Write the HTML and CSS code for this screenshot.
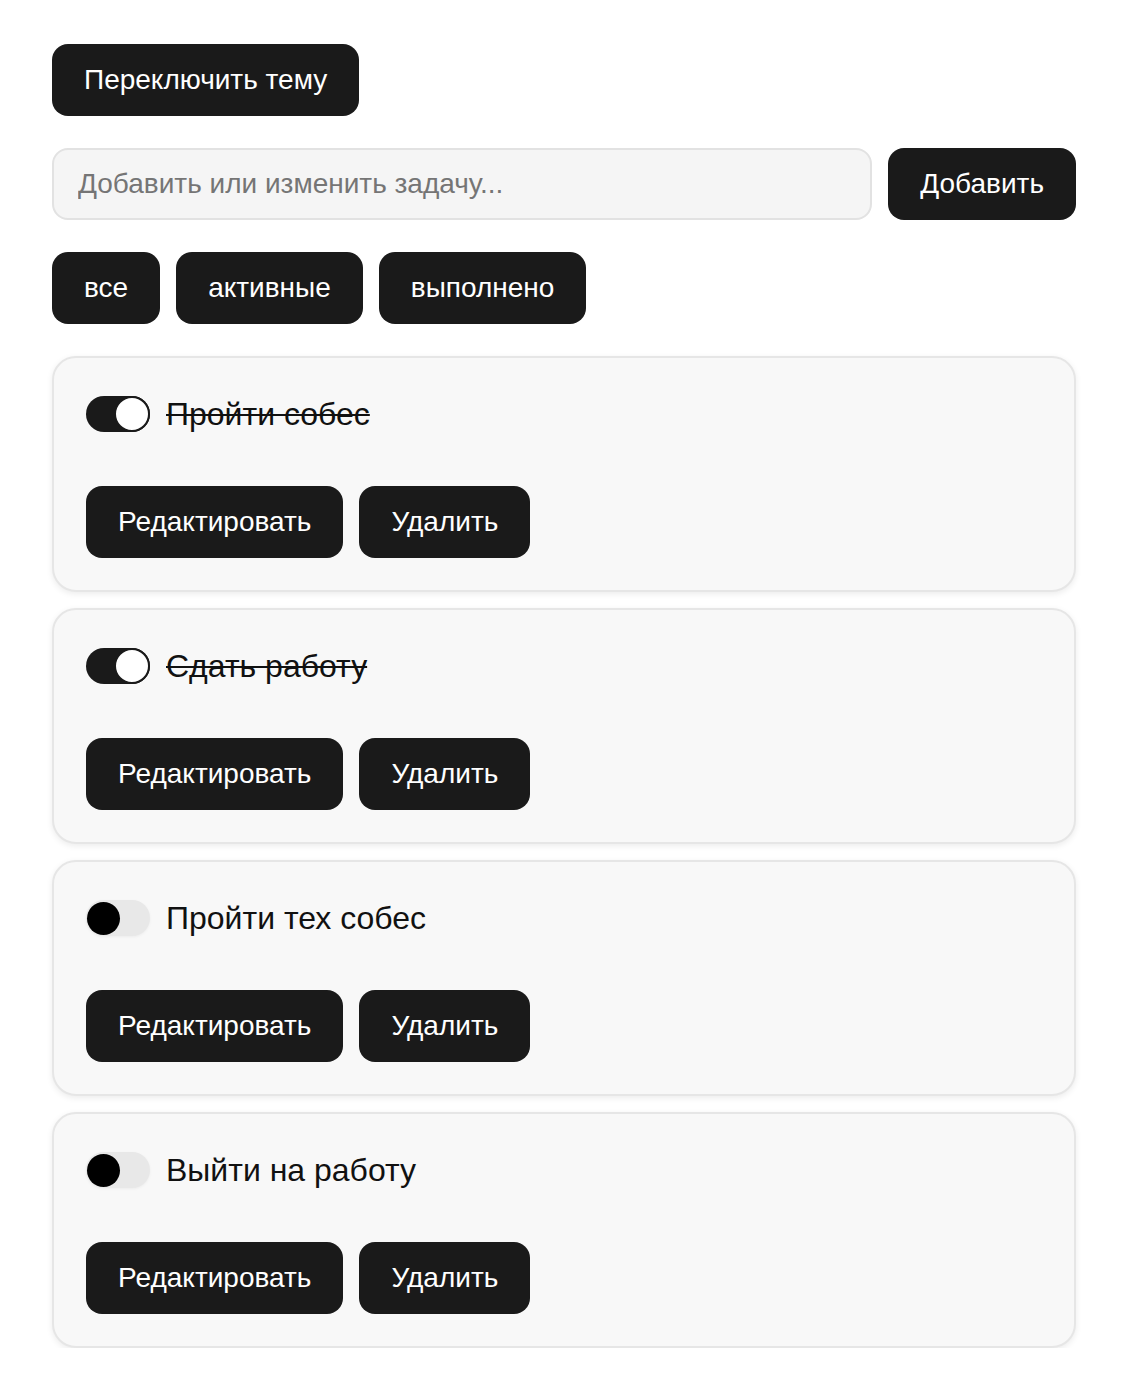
FILE: index.html
```html
<!DOCTYPE html>
<html lang="ru">
<head>
<meta charset="utf-8">
<title>Задачи</title>
<link rel="stylesheet" href="styles.css">
</head>
<body>
<div class="app">
  <div class="top">
    <button class="btn">Переключить тему</button>
  </div>
  <div class="add-row">
    <input class="task-input" type="text" placeholder="Добавить или изменить задачу...">
    <button class="btn">Добавить</button>
  </div>
  <div class="filters">
    <button class="btn">все</button>
    <button class="btn">активные</button>
    <button class="btn">выполнено</button>
  </div>
  <div class="list">
    <div class="card">
      <div class="task-row">
        <span class="toggle on"><span class="knob"></span></span>
        <span class="task-text done">Пройти собес</span>
      </div>
      <div class="actions">
        <button class="btn">Редактировать</button>
        <button class="btn">Удалить</button>
      </div>
    </div>
    <div class="card">
      <div class="task-row">
        <span class="toggle on"><span class="knob"></span></span>
        <span class="task-text done">Сдать работу</span>
      </div>
      <div class="actions">
        <button class="btn">Редактировать</button>
        <button class="btn">Удалить</button>
      </div>
    </div>
    <div class="card">
      <div class="task-row">
        <span class="toggle"><span class="knob"></span></span>
        <span class="task-text">Пройти тех собес</span>
      </div>
      <div class="actions">
        <button class="btn">Редактировать</button>
        <button class="btn">Удалить</button>
      </div>
    </div>
    <div class="card">
      <div class="task-row">
        <span class="toggle"><span class="knob"></span></span>
        <span class="task-text">Выйти на работу</span>
      </div>
      <div class="actions">
        <button class="btn">Редактировать</button>
        <button class="btn">Удалить</button>
      </div>
    </div>
  </div>
</div>
</body>
</html>
```

FILE: styles.css
```css
* { box-sizing: border-box; }
html, body { margin: 0; padding: 0; background: #ffffff; }
body {
  font-family: "Liberation Sans", Arial, sans-serif;
  color: #111111;
}
.app {
  width: 1024px;
  margin-left: 52px;
  padding-top: 44px;
  display: flex;
  flex-direction: column;
  gap: 32px;
}
.top { display: flex; }
.btn {
  font-family: "Liberation Sans", Arial, sans-serif;
  font-size: 28px;
  line-height: 32px;
  height: 72px;
  padding: 0 32px;
  background: #1a1a1a;
  color: #ffffff;
  border: none;
  border-radius: 16px;
  cursor: pointer;
  white-space: nowrap;
}
.add-row {
  display: flex;
  gap: 16px;
}
.task-input {
  flex: 1;
  height: 72px;
  padding: 0 24px;
  font-family: "Liberation Sans", Arial, sans-serif;
  font-size: 28px;
  background: #f5f5f5;
  border: 2px solid #e2e2e2;
  border-radius: 16px;
  color: #111;
  outline: none;
}
.task-input::placeholder { color: #757575; }
.filters {
  display: flex;
  gap: 16px;
}
.list {
  display: flex;
  flex-direction: column;
  gap: 16px;
}
.card {
  background: #f8f8f8;
  border: 2px solid #e6e6e6;
  border-radius: 24px;
  padding: 32px;
  box-shadow: 0 2px 6px rgba(0, 0, 0, 0.08);
  display: flex;
  flex-direction: column;
  gap: 48px;
}
.task-row {
  display: flex;
  align-items: center;
  gap: 16px;
  height: 48px;
}
.toggle {
  position: relative;
  width: 64px;
  height: 36px;
  border-radius: 18px;
  background: #e8e8e8;
  box-shadow: 0 1px 3px rgba(0, 0, 0, 0.05);
  flex: none;
}
.toggle .knob {
  position: absolute;
  top: 2px;
  left: 1px;
  width: 33px;
  height: 33px;
  border-radius: 50%;
  background: #000000;
}
.toggle.on { background: #1a1a1a; box-shadow: none; }
.toggle.on .knob {
  top: 0;
  left: 28px;
  width: 36px;
  height: 36px;
  background: #ffffff;
  border: 2px solid #1a1a1a;
}
.task-text {
  font-size: 32px;
  color: #111111;
}
.task-text.done { text-decoration: line-through; text-decoration-thickness: 2px; }
.actions {
  display: flex;
  gap: 16px;
}
```
